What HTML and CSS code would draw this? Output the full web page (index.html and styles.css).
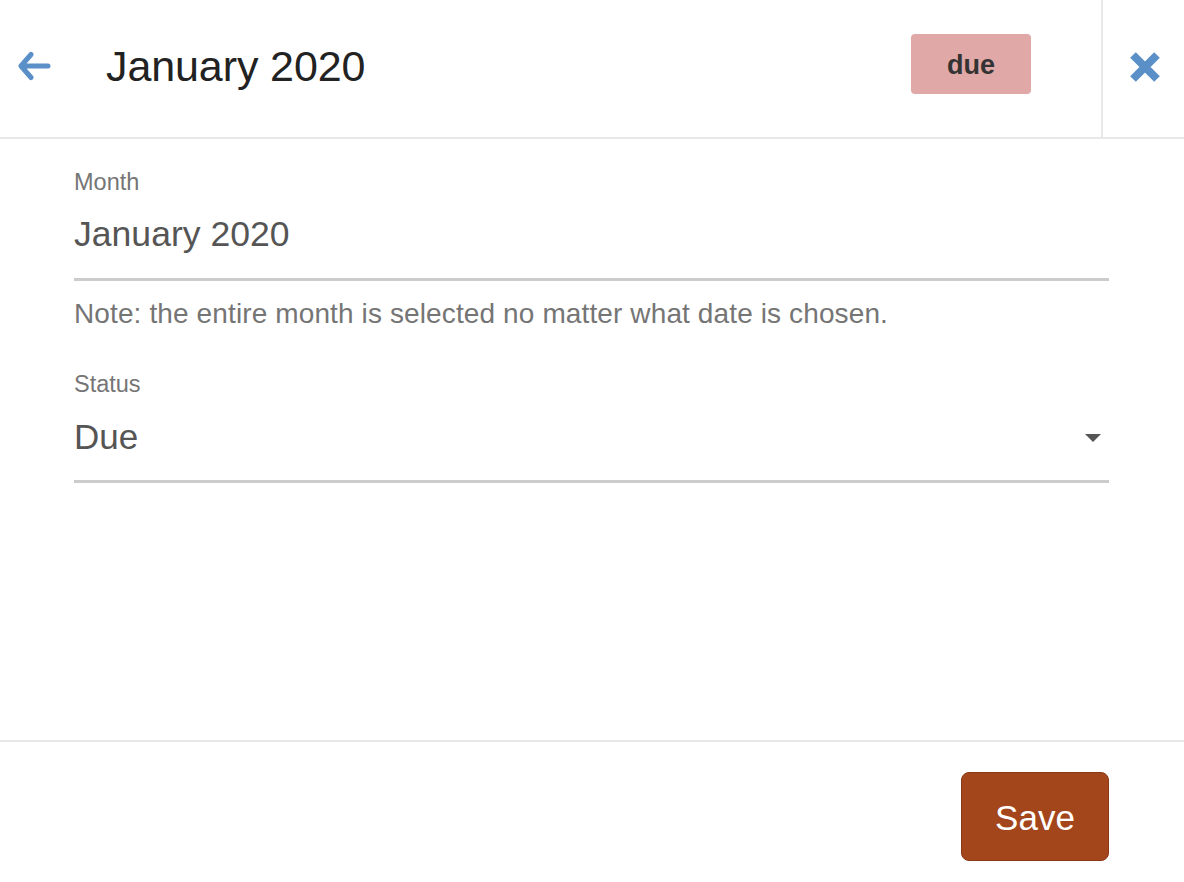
FILE: index.html
```html
<!DOCTYPE html>
<html>
<head>
<meta charset="utf-8">
<link rel="stylesheet" href="styles.css">
</head>
<body>
<div class="page">
  <header class="header">
    <button class="back" aria-label="Back">
      <svg width="34" height="32" viewBox="0 0 34 32">
        <path d="M13 3.5 L3 15 L13 26.5 M3.5 15 L30 15" fill="none" stroke="#5a8fc8" stroke-width="5" stroke-linecap="round" stroke-linejoin="round"/>
      </svg>
    </button>
    <h1 class="title">January 2020</h1>
    <div class="spacer"></div>
    <span class="badge">due</span>
    <button class="close" aria-label="Close">
      <svg width="32" height="32" viewBox="0 0 32 32">
        <path d="M4 4 L28 28 M28 4 L4 28" fill="none" stroke="#5a8fc8" stroke-width="8"/>
      </svg>
    </button>
  </header>
  <main class="content">
    <div class="field">
      <div class="label">Month</div>
      <div class="value month-value">January 2020</div>
      <div class="note">Note: the entire month is selected no matter what date is chosen.</div>
    </div>
    <div class="field status-field">
      <div class="label">Status</div>
      <div class="value select-value">
        <span>Due</span>
        <span class="caret"></span>
      </div>
    </div>
  </main>
  <footer class="footer">
    <button class="save">Save</button>
  </footer>
</div>
</body>
</html>
```

FILE: styles.css
```css
html, body {
  margin: 0;
  padding: 0;
  background: #ffffff;
  font-family: "Liberation Sans", Arial, Helvetica, sans-serif;
}

.page {
  height: 882px;
  display: flex;
  flex-direction: column;
}

.header {
  height: 139px;
  box-sizing: border-box;
  border-bottom: 2px solid #e8e8e8;
  display: flex;
  align-items: center;
}

.back {
  border: 0;
  background: none;
  padding: 0 0 0 18px;
  margin: 0;
  width: 106px;
  height: 100%;
  display: flex;
  align-items: center;
  cursor: pointer;
}

.back svg {
  display: block;
  margin-top: -4px;
}

.title {
  margin: -4px 0 0 0;
  font-size: 43px;
  font-weight: normal;
  color: #222222;
  letter-spacing: -0.1px;
}

.spacer {
  flex: 1;
}

.badge {
  width: 120px;
  height: 60px;
  box-sizing: border-box;
  background: #e0a8a6;
  border-radius: 4px;
  color: #333333;
  font-weight: bold;
  font-size: 27px;
  display: flex;
  align-items: center;
  justify-content: center;
  padding-top: 2px;
  margin-right: 70px;
  margin-top: -9px;
}

.close {
  border: 0;
  border-left: 2px solid #e8e8e8;
  background: none;
  width: 83px;
  height: 100%;
  padding: 0;
  margin: 0;
  display: flex;
  align-items: center;
  justify-content: center;
  cursor: pointer;
}

.close svg {
  display: block;
  margin-left: 2px;
  margin-top: -4px;
}

.content {
  flex: 1;
  padding: 29px 75px 0 74px;
}

.label {
  font-size: 23.5px;
  line-height: 28px;
  color: #757575;
}

.value {
  font-size: 35px;
  line-height: 44px;
  color: #555555;
  border-bottom: 3px solid #cccccc;
}

.month-value {
  margin-top: 16px;
  padding-bottom: 22px;
  font-size: 35.6px;
}

.note {
  margin-top: 16px;
  font-size: 28px;
  line-height: 34px;
  letter-spacing: 0.12px;
  color: #757575;
}

.status-field {
  margin-top: 39px;
}

.select-value {
  margin-top: 17px;
  padding-bottom: 21px;
  display: flex;
  align-items: center;
  justify-content: space-between;
}

.caret {
  width: 0;
  height: 0;
  border-left: 8px solid transparent;
  border-right: 8px solid transparent;
  border-top: 8px solid #555555;
  margin-right: 8px;
  margin-top: 2px;
}

.footer {
  border-top: 2px solid #e8e8e8;
  padding: 30px 75px 21px 0;
  display: flex;
  justify-content: flex-end;
}

.save {
  width: 148px;
  height: 89px;
  box-sizing: border-box;
  background: #a3461c;
  border: 1px solid #8a3915;
  border-radius: 8px;
  color: #ffffff;
  font-family: "Liberation Sans", Arial, Helvetica, sans-serif;
  font-size: 35px;
  padding: 2px 0 0 0;
  cursor: pointer;
}
```
